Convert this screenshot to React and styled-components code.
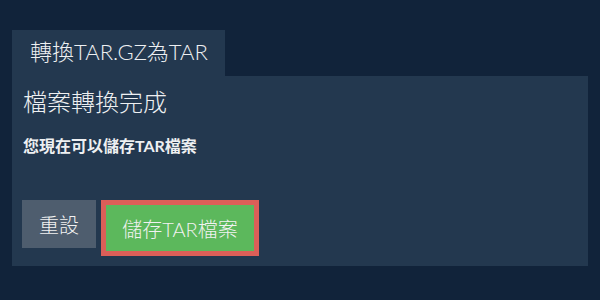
import React from 'react'
import styled, { createGlobalStyle } from 'styled-components'

const GlobalStyle = createGlobalStyle`
    html, body {
        margin: 0;
        padding: 0;
        background: #11233a;
    }
    body {
        font-family: Lato, "Noto Sans CJK TC", sans-serif;
        color: #eef0f2;
    }
`

const Page = styled.div`
    width: 600px;
    height: 300px;
    box-sizing: border-box;
    padding: 30px 12px 0 12px;
`

const Tab = styled.div`
    display: inline-block;
    height: 46px;
    line-height: 44px;
    padding: 0 17px 0 18px;
    background: #23384f;
    font-size: 22px;
    font-weight: 300;
`

const Panel = styled.div`
    background: #23384f;
    padding: 10px 10px 10px 10px;
`

const Title = styled.h2`
    margin: 0;
    font-size: 24px;
    font-weight: 300;
    line-height: 32px;
    padding-left: 1px;
`

const Message = styled.p`
    margin: 18px 0 0 1px;
    font-size: 16px;
    font-weight: 700;
    line-height: 20px;
`

const Actions = styled.div`
    display: flex;
    align-items: flex-start;
    gap: 5px;
    margin-top: 44px;
`

const Button = styled.button`
    font-family: Lato, "Noto Sans CJK TC", sans-serif;
    font-size: 20px;
    font-weight: 300;
    color: #f2f2f2;
    cursor: pointer;
    box-sizing: border-box;
    background: ${p => (p.$primary ? '#5cb85c' : '#4e5d6e')};
    height: ${p => (p.$primary ? '56px' : '48px')};
    width: ${p => (p.$primary ? '158px' : '74px')};
    border: ${p => (p.$primary ? '5px solid #dc5f58' : 'none')};
    padding: 0;
`

export default function App() {
    return (
        <Page>
            <GlobalStyle />
            <Tab>轉換TAR.GZ為TAR</Tab>
            <Panel>
                <Title>檔案轉換完成</Title>
                <Message>您現在可以儲存TAR檔案</Message>
                <Actions>
                    <Button>重設</Button>
                    <Button $primary>儲存TAR檔案</Button>
                </Actions>
            </Panel>
        </Page>
    )
}
